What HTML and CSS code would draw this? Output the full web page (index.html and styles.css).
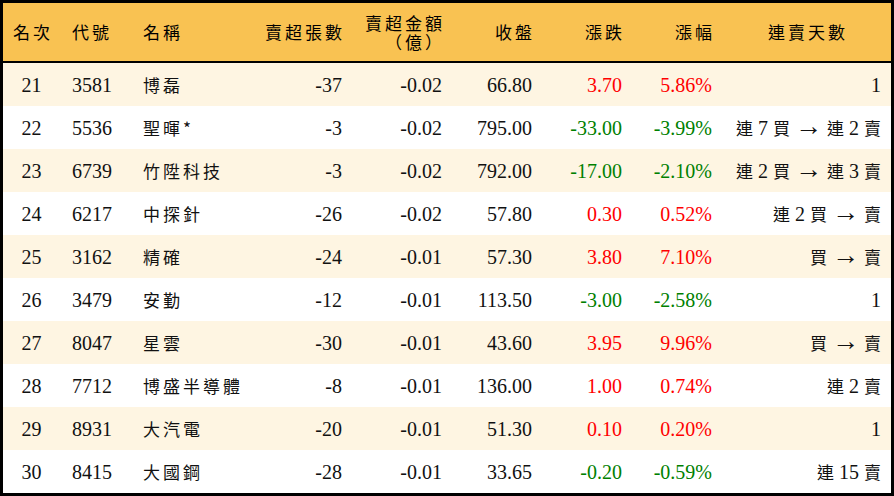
FILE: index.html
```html
<!DOCTYPE html>
<html lang="zh-Hant">
<head>
<meta charset="utf-8">
<link rel="stylesheet" href="styles.css">
</head>
<body>
<table class="rank">
  <colgroup>
    <col class="c-rank"><col class="c-code"><col class="c-name"><col class="c-vol"><col class="c-amt"><col class="c-close"><col class="c-chg"><col class="c-pct"><col class="c-days">
  </colgroup>
  <thead>
    <tr>
      <th class="center">名次</th>
      <th class="left">代號</th>
      <th class="left">名稱</th>
      <th class="right">賣超張數</th>
      <th class="right"><span class="hl">賣超金額</span><span class="hl">（億）</span></th>
      <th class="right">收盤</th>
      <th class="right">漲跌</th>
      <th class="right">漲幅</th>
      <th class="center">連賣天數</th>
    </tr>
  </thead>
  <tbody>
    <tr class="odd"><td class="center">21</td><td class="left">3581</td><td class="left name">博磊</td><td class="right">-37</td><td class="right">-0.02</td><td class="right">66.80</td><td class="right up">3.70</td><td class="right up">5.86%</td><td class="right days">1</td></tr>
    <tr><td class="center">22</td><td class="left">5536</td><td class="left name">聖暉*</td><td class="right">-3</td><td class="right">-0.02</td><td class="right">795.00</td><td class="right down">-33.00</td><td class="right down">-3.99%</td><td class="right days"><span class="k">連</span> 7 <span class="k">買</span> <span class="arr">→</span> <span class="k">連</span> 2 <span class="k">賣</span></td></tr>
    <tr class="odd"><td class="center">23</td><td class="left">6739</td><td class="left name">竹陞科技</td><td class="right">-3</td><td class="right">-0.02</td><td class="right">792.00</td><td class="right down">-17.00</td><td class="right down">-2.10%</td><td class="right days"><span class="k">連</span> 2 <span class="k">買</span> <span class="arr">→</span> <span class="k">連</span> 3 <span class="k">賣</span></td></tr>
    <tr><td class="center">24</td><td class="left">6217</td><td class="left name">中探針</td><td class="right">-26</td><td class="right">-0.02</td><td class="right">57.80</td><td class="right up">0.30</td><td class="right up">0.52%</td><td class="right days"><span class="k">連</span> 2 <span class="k">買</span> <span class="arr">→</span> <span class="k">賣</span></td></tr>
    <tr class="odd"><td class="center">25</td><td class="left">3162</td><td class="left name">精確</td><td class="right">-24</td><td class="right">-0.01</td><td class="right">57.30</td><td class="right up">3.80</td><td class="right up">7.10%</td><td class="right days"><span class="k">買</span> <span class="arr">→</span> <span class="k">賣</span></td></tr>
    <tr><td class="center">26</td><td class="left">3479</td><td class="left name">安勤</td><td class="right">-12</td><td class="right">-0.01</td><td class="right">113.50</td><td class="right down">-3.00</td><td class="right down">-2.58%</td><td class="right days">1</td></tr>
    <tr class="odd"><td class="center">27</td><td class="left">8047</td><td class="left name">星雲</td><td class="right">-30</td><td class="right">-0.01</td><td class="right">43.60</td><td class="right up">3.95</td><td class="right up">9.96%</td><td class="right days"><span class="k">買</span> <span class="arr">→</span> <span class="k">賣</span></td></tr>
    <tr><td class="center">28</td><td class="left">7712</td><td class="left name">博盛半導體</td><td class="right">-8</td><td class="right">-0.01</td><td class="right">136.00</td><td class="right up">1.00</td><td class="right up">0.74%</td><td class="right days"><span class="k">連</span> 2 <span class="k">賣</span></td></tr>
    <tr class="odd"><td class="center">29</td><td class="left">8931</td><td class="left name">大汽電</td><td class="right">-20</td><td class="right">-0.01</td><td class="right">51.30</td><td class="right up">0.10</td><td class="right up">0.20%</td><td class="right days">1</td></tr>
    <tr><td class="center">30</td><td class="left">8415</td><td class="left name">大國鋼</td><td class="right">-28</td><td class="right">-0.01</td><td class="right">33.65</td><td class="right down">-0.20</td><td class="right down">-0.59%</td><td class="right days"><span class="k">連</span> 15 <span class="k">賣</span></td></tr>
  </tbody>
</table>
</body>
</html>
```
FILE: styles.css
```css
html, body {
  margin: 0;
  padding: 0;
  background: #ffffff;
}

.rank {
  width: 100%;
  table-layout: fixed;
  border-collapse: separate;
  border-spacing: 0;
  border: 3px solid #000000;
  font-family: "Liberation Serif", "Noto Sans CJK TC", serif;
  font-size: 20px;
  color: #111111;
}

.c-rank { width: 57px; }
.c-code { width: 71px; }
.c-name { width: 119px; }
.c-vol { width: 102px; }
.c-amt { width: 100px; }
.c-close { width: 90px; }
.c-chg { width: 90px; }
.c-pct { width: 90px; }
.c-days { width: 169px; }

.rank th {
  height: 58px;
  padding: 0;
  background: #f9c252;
  border-bottom: 2px solid #000000;
  font-family: "Noto Sans CJK TC", serif;
  font-weight: 400;
  font-size: 17px;
  line-height: 20px;
  letter-spacing: 3px;
  color: #000000;
  vertical-align: middle;
}

.hl {
  display: block;
  height: 19px;
  line-height: 19px;
}

.rank td {
  height: 43px;
  padding: 0;
  line-height: 22px;
  vertical-align: middle;
  white-space: nowrap;
}

.rank tr.odd td {
  background: #fef5e2;
}

.center { text-align: center; }
.left { text-align: left; }
.right { text-align: right; }

.rank .left { padding-left: 12px; }
.rank .right { padding-right: 10px; }
.rank th.right { padding-right: 7px; }
.rank th.center { padding-left: 3px; }

.rank td.name {
  font-family: "Noto Sans CJK TC", serif;
  font-size: 17px;
  letter-spacing: 3px;
}

.k {
  font-family: "Noto Sans CJK TC", serif;
  font-size: 17px;
}

.arr {
  font-size: 27px;
  line-height: 20px;
}

.up { color: #ff0000; }
.down { color: #008000; }
```
